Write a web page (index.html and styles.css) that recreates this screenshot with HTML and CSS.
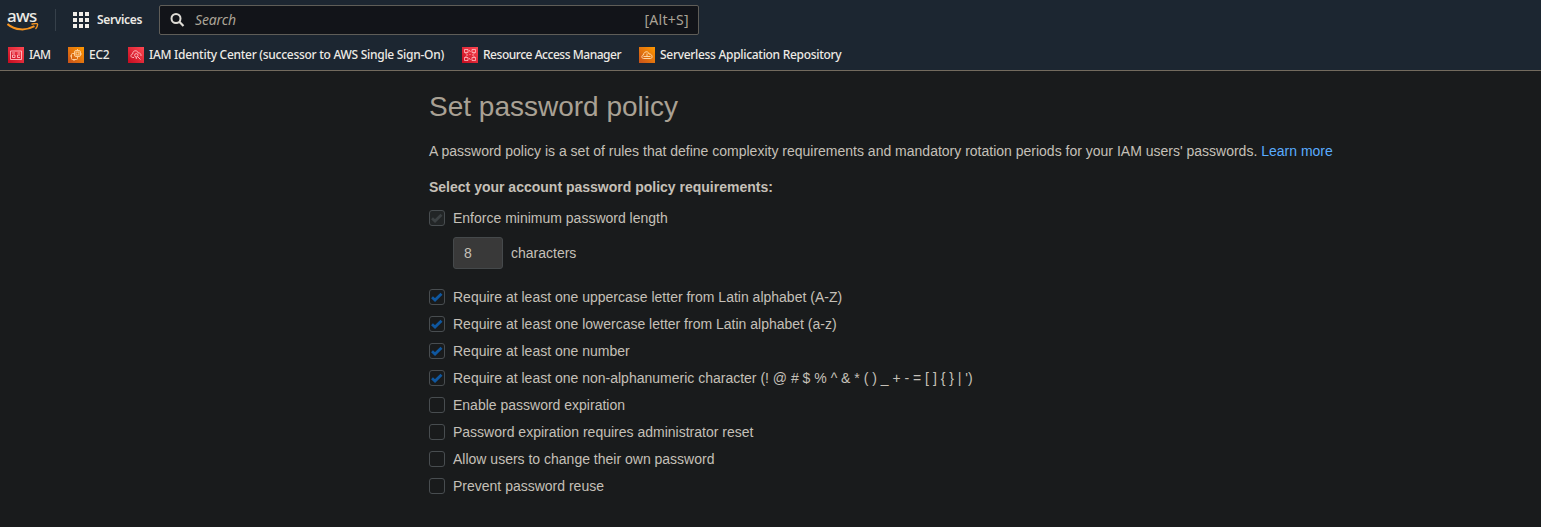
FILE: index.html
```
<!DOCTYPE html>
<html lang="en">
<head>
<meta charset="utf-8">
<title>Set password policy</title>
<link rel="stylesheet" href="styles.css">
</head>
<body>
<svg width="0" height="0" class="defs">
  <defs>
    <linearGradient id="red" x1="0" y1="1" x2="1" y2="0"><stop offset="0" stop-color="#c40b1f"/><stop offset="1" stop-color="#ff4752"/></linearGradient>
    <linearGradient id="orange" x1="0" y1="1" x2="1" y2="0"><stop offset="0" stop-color="#c8511b"/><stop offset="1" stop-color="#ff9900"/></linearGradient>
    <symbol id="check" viewBox="0 0 16 16"><path d="M3 8.300 6 11 12.500 4.700" fill="none" stroke="currentColor" stroke-width="2.800"/></symbol>
  </defs>
</svg>
<header class="header">
  <div class="topbar">
    <div class="logo">
      <span class="logo-text">aws</span>
      <svg class="smile" width="33" height="9" viewBox="0 0 33 9" fill="none" stroke="#f79420"><path d="M.5 1C8 7.500 19 8 27.500 3.200" stroke-width="2"/><path d="M24.500 1.200C27.500 .4 30.500 .3 30.500 1.200C30.700 2.500 30 4.500 28.500 6" stroke-width="1.400"/></svg>
    </div>
    <span class="divider"></span>
    <svg class="grid" width="16" height="16" fill="#f1eee8"><path d="M0 0h4v4H0zM6 0h4v4H6zM12 0h4v4h-4zM0 6h4v4H0zM6 6h4v4H6zM12 6h4v4h-4zM0 12h4v4H0zM6 12h4v4H6zM12 12h4v4h-4z"/></svg>
    <span class="services">Services</span>
    <div class="search">
      <svg width="16" height="16" viewBox="0 0 16 16" fill="none" stroke="#dedbd5" stroke-width="2"><circle cx="6" cy="6.500" r="4.500"/><path d="M9.300 9.800 13.500 14" stroke-width="2.200"/></svg>
      <span class="placeholder">Search</span>
      <span class="shortcut">[Alt+S]</span>
    </div>
  </div>
  <nav class="favorites">
    <a class="fav fav-iam"><svg width="16" height="16"><rect width="16" height="16" fill="url(#red)"/><g fill="none" stroke="#ffc0c4" stroke-width=".9"><path d="M2.500 4h11v8.500h-11zM4 6h3M9.500 6H12M9.500 8h2.500M9.500 8v2.500h2.500"/><path d="M4.500 8h2.500v2.500h-2.500z"/></g></svg><span>IAM</span></a>
    <a class="fav fav-ec2"><svg width="16" height="16"><rect width="16" height="16" fill="url(#orange)"/><g fill="none" stroke="#ffd6a6" stroke-width=".9"><rect x="6.500" y="3.500" width="6" height="6" rx="1.500"/><path d="M9.500 10v1.500a1 1 0 0 1-1 1h-4a1 1 0 0 1-1-1v-4a1 1 0 0 1 1-1H6M2 9h1.500M6 12.500V14M9.500 2v1.500M12.500 7H14"/><rect x="8" y="5" width="3" height="3"/></g></svg><span>EC2</span></a>
    <a class="fav fav-idc"><svg width="16" height="16"><rect width="16" height="16" fill="url(#red)"/><g fill="none" stroke="#ffc0c4" stroke-width=".9"><path d="M6 10.500H4.800C2.200 10.500 2.500 7 4.700 7C4.500 3 9.500 2.800 10.300 6C12 5.700 13.300 7 13 9"/><circle cx="8.300" cy="8.300" r="1.700"/><path d="M9.500 9.500 12.500 12.500M8.300 10V12"/></g></svg><span>IAM Identity Center (successor to AWS Single Sign-On)</span></a>
    <a class="fav fav-ram"><svg width="16" height="16"><rect width="16" height="16" fill="url(#red)"/><g fill="none" stroke="#ffc0c4" stroke-width=".8"><path d="M2.500 2.500H6v3H2.500zM10 2.500h3.500v3H10zM3 5.500 5.500 8 3 10.500M13 5.500 10.500 8l2.500 2.500M2.500 10.500H6v3H2.500zM10 10.500h3.500v3H10zM7 3l1.500 2M7 11l1.500 2M7.500 7.500h1"/></g></svg><span>Resource Access Manager</span></a>
    <a class="fav fav-sar"><svg width="16" height="16"><rect width="16" height="16" fill="url(#orange)"/><g fill="none" stroke="#ffe0b5" stroke-width=".9"><path d="M4.500 11.500C2.300 11.500 2.300 8 4.500 8C4.700 4 9.500 3.700 10 7C13.500 6.700 14 11.500 11.500 11.500zM4.500 9.500h7M8 6.500v3"/></g></svg><span>Serverless Application Repository</span></a>
  </nav>
</header>
<main class="content">
  <h1>Set password policy</h1>
  <p class="intro"><span>A password policy is a set of rules that define complexity requirements and mandatory rotation periods for your IAM users' passwords.</span> <a class="link">Learn more</a></p>
  <h2>Select your account password policy requirements:</h2>
  <div class="option"><span class="box disabled"><svg width="16" height="16"><use href="#check"/></svg></span><span>Enforce minimum password length</span></div>
  <div class="length"><span class="input">8</span><span>characters</span></div>
  <div class="option"><span class="box"><svg width="16" height="16"><use href="#check"/></svg></span><span>Require at least one uppercase letter from Latin alphabet (A-Z)</span></div>
  <div class="option"><span class="box"><svg width="16" height="16"><use href="#check"/></svg></span><span>Require at least one lowercase letter from Latin alphabet (a-z)</span></div>
  <div class="option"><span class="box"><svg width="16" height="16"><use href="#check"/></svg></span><span>Require at least one number</span></div>
  <div class="option"><span class="box"><svg width="16" height="16"><use href="#check"/></svg></span><span>Require at least one non-alphanumeric character (! @ # $ % ^ &amp; * ( ) _ + - = [ ] { } | ')</span></div>
  <div class="option"><span class="box"></span><span>Enable password expiration</span></div>
  <div class="option"><span class="box"></span><span>Password expiration requires administrator reset</span></div>
  <div class="option"><span class="box"></span><span>Allow users to change their own password</span></div>
  <div class="option"><span class="box"></span><span>Prevent password reuse</span></div>
</main>
</body>
</html>
```
FILE: styles.css
```
* { box-sizing: border-box; }
body { margin: 0; height: 527px; overflow: hidden; background: #191b1c; color: #c5c0b8; font: 14px/20px "Liberation Sans", Arial, sans-serif; }
.defs { display: block; height: 0; }
.header { height: 71px; background: #1c2631; border-bottom: 1px solid #736b5e; font-family: "Noto Sans", "Open Sans", sans-serif; color: #edeae5; }
.topbar { display: flex; align-items: center; height: 40px; padding-left: 7px; }
.logo { width: 33px; height: 30px; display: flex; flex-direction: column; }
.logo-text { height: 18px; line-height: 21px; font-size: 17px; font-weight: 500; letter-spacing: -.7px; padding-left: 0; }
.smile { display: block; }
.divider { width: 1px; height: 22px; background: #36404a; margin-left: 15px; }
.grid { margin-left: 17px; }
.services { margin-left: 8px; width: 62px; font-size: 12px; font-weight: 600; letter-spacing: -.35px; white-space: nowrap; }
.search { width: 540px; height: 30px; border: 1px solid #5f5d58; border-radius: 2px; background: #121419; display: flex; align-items: center; padding: 0 9px 0 10px; color: #aaa396; font-size: 14px; }
.placeholder { margin-left: 9px; font-style: italic; letter-spacing: -.15px; }
.shortcut { margin-left: auto; letter-spacing: .3px; }
.favorites { display: flex; height: 30px; align-items: center; padding-left: 8px; }
.fav { display: flex; align-items: center; gap: 5px; font-size: 12px; font-weight: 500; white-space: nowrap; letter-spacing: -.3px; flex: none; }
.fav svg { flex: none; }
.fav-iam { width: 60px; letter-spacing: -.6px; }
.fav-ec2 { width: 60px; }
.fav-idc { width: 334px; letter-spacing: -.28px; }
.fav-ram { width: 177px; letter-spacing: -.47px; }
.content { padding: 15px 0 0 429px; }
h1 { margin: 0; font-size: 28px; line-height: 42px; font-weight: 400; color: #a9a194; }
.intro { margin: 13px 0 0; white-space: nowrap; }
.link { color: #5aacff; }
h2 { margin: 16px 0 0; font-size: 14px; line-height: 20px; font-weight: 700; }
.option { display: flex; align-items: center; gap: 8px; height: 27px; white-space: nowrap; }
h2 + .option { margin-top: 7px; }
.box { width: 16px; height: 16px; border: 1px solid #484d50; border-radius: 3px; color: #0f579f; display: flex; align-items: center; justify-content: center; }
.box svg { flex: none; }
.box.disabled { background: #222526; color: #3c4143; }
.length { display: flex; align-items: center; gap: 8px; height: 32px; margin: 6px 0 14px 24px; }
.input { width: 50px; height: 32px; border: 1px solid #45494b; border-radius: 3px; background: #393939; padding: 5px 10px; line-height: 20px; }
```
